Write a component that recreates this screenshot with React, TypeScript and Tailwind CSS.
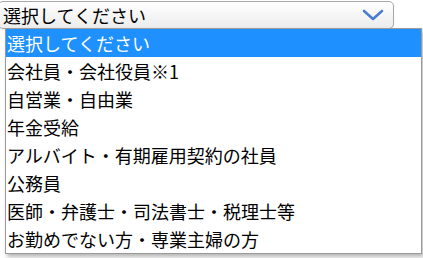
const options = [
  '選択してください',
  '会社員・会社役員※1',
  '自営業・自由業',
  '年金受給',
  'アルバイト・有期雇用契約の社員',
  '公務員',
  '医師・弁護士・司法書士・税理士等',
  'お勤めでない方・専業主婦の方',
];

function Chevron() {
  return (
    <svg width="22" height="12" viewBox="0 0 22 12" fill="none">
      <path d="M2 2 L11 10 L20 2" stroke="#4a7dd1" strokeWidth="2.6" strokeLinecap="round" strokeLinejoin="round" />
    </svg>
  );
}

export default function App() {
  return (
    <div
      className="relative w-[423px] h-[258px] bg-white overflow-hidden text-black"
      style={{ fontFamily: '"Noto Sans CJK JP", "Noto Sans", sans-serif' }}
    >
      {/* closed select */}
      <div className="ml-[-2px] mt-px w-[396px] h-[28px] flex items-center justify-between pl-[4px] pr-[9px] border border-[#a8a8a8] rounded-[5px] bg-gradient-to-b from-white to-[#ececec] shadow-[0_1px_1px_rgba(0,0,0,0.08)]">
        <span className="text-[18px] leading-none">選択してください</span>
        <Chevron />
      </div>

      {/* open list */}
      <ul className="absolute left-[5px] top-[28px] w-[417px] bg-white border border-[#9a9a9a] shadow-[2px_3px_4px_rgba(0,0,0,0.28)]">
        {options.map((label, i) => (
          <li
            key={label}
            className={
              i === 0
                ? 'h-[28px] flex items-center pl-[1px] text-[18px] leading-none bg-[#1e90ff] text-white'
                : 'h-[28px] flex items-center pl-[1px] text-[18px] leading-none'
            }
          >
            {label}
          </li>
        ))}
      </ul>
    </div>
  );
}
